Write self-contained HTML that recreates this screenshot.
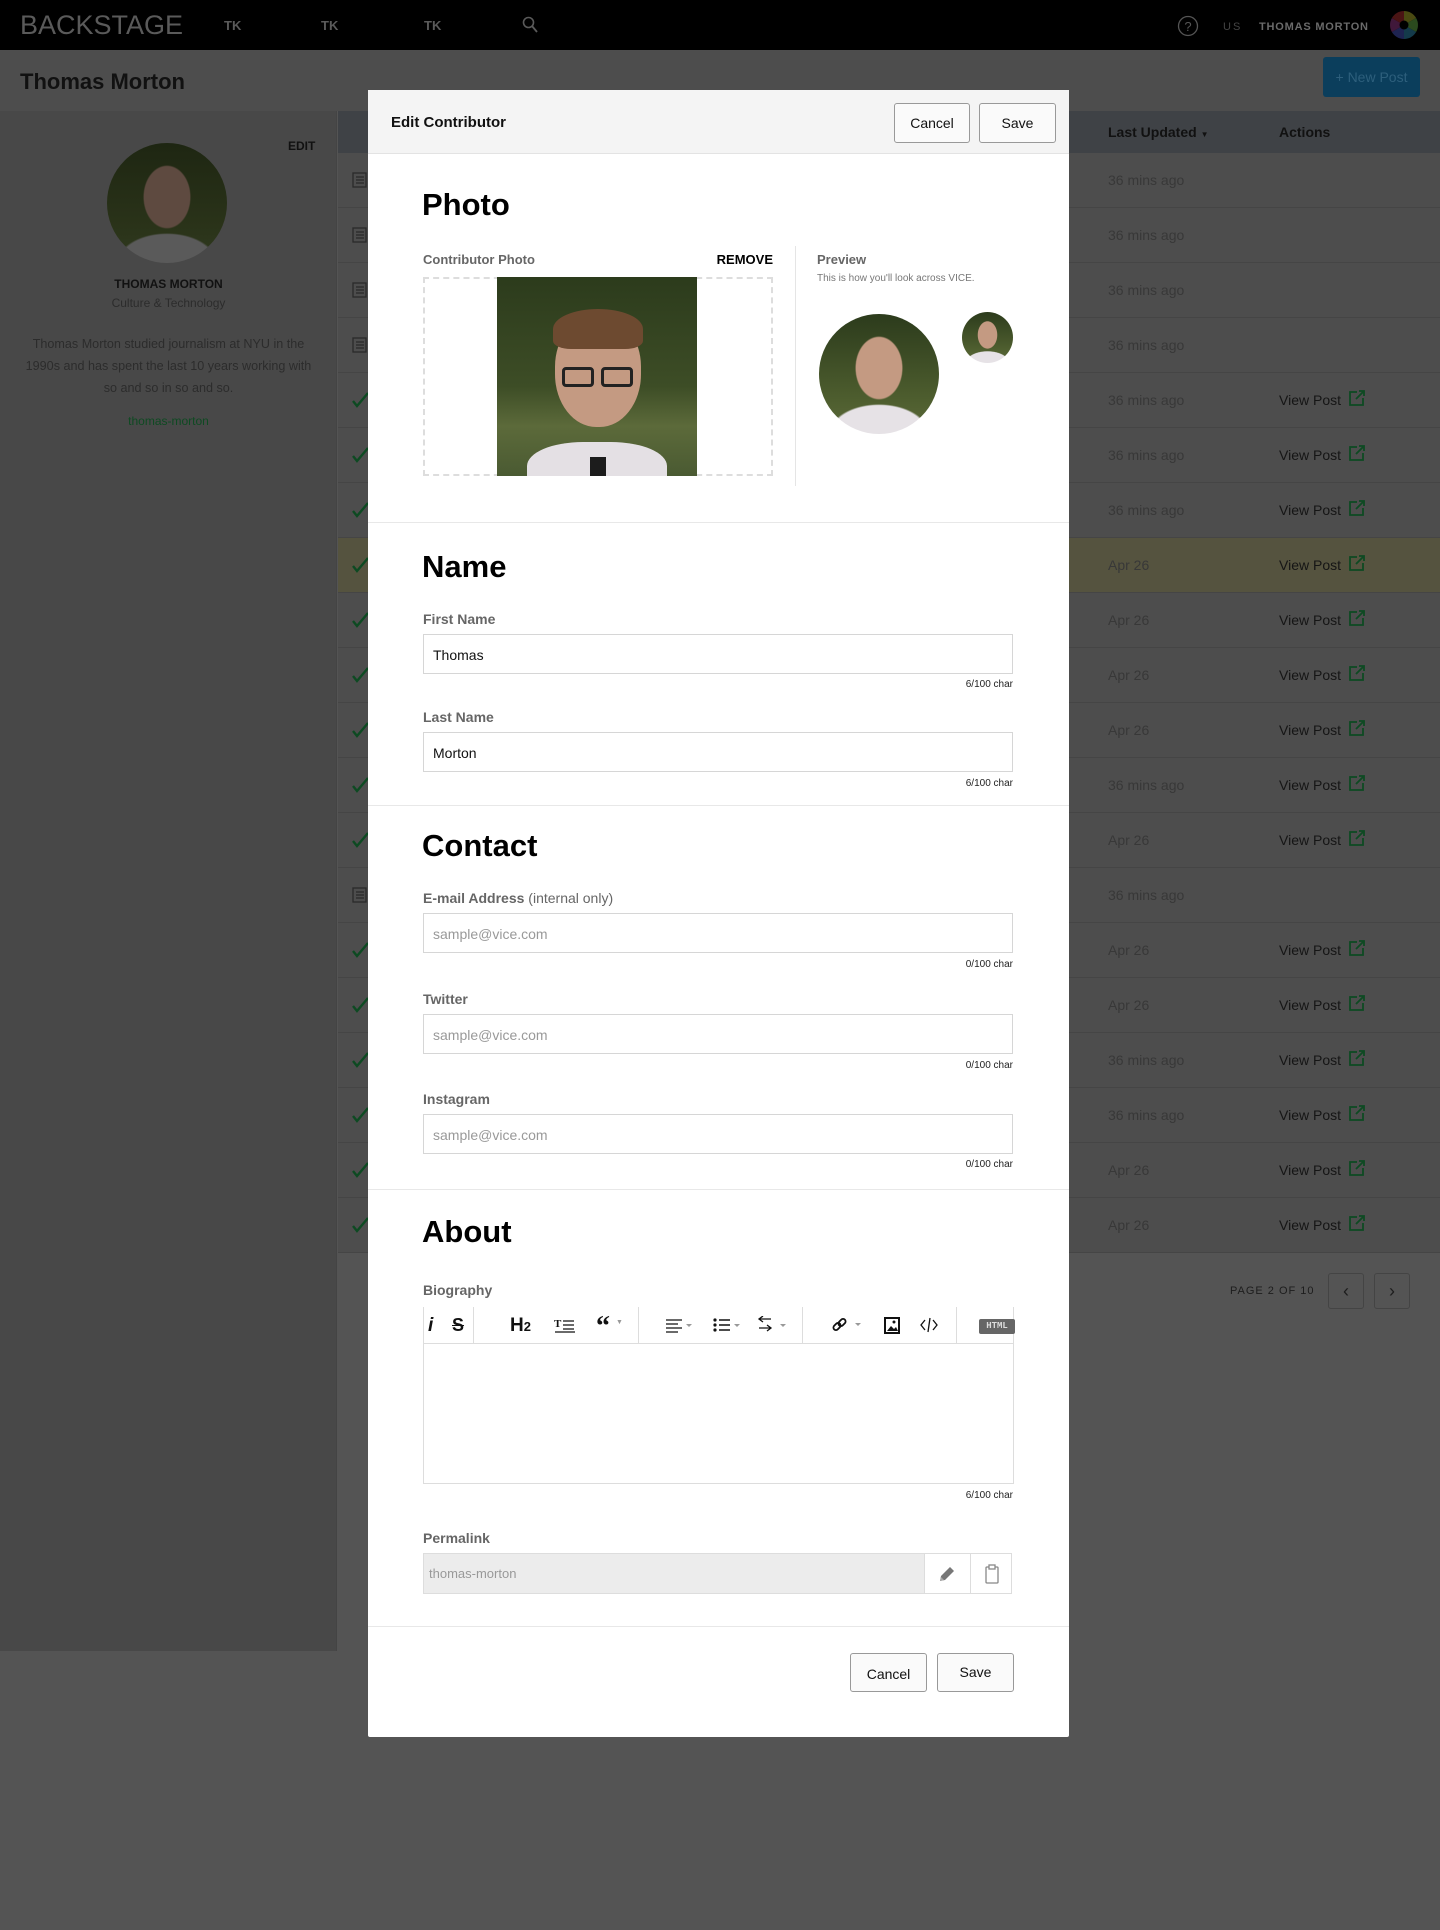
<!DOCTYPE html>
<html><head><meta charset="utf-8"><style>
*{box-sizing:border-box;margin:0;padding:0}
body{width:1440px;height:1930px;background:#545454;font-family:"Liberation Sans",sans-serif;position:relative;overflow:hidden}
.abs{position:absolute}
.nav{left:0;top:0;width:1440px;height:50px;background:#000}
.titlebar{left:0;top:50px;width:1440px;height:61px;background:#4d4d4d}
.sidebar{left:0;top:111px;width:337px;height:1540px;background:#484848;border-right:1px solid #444}
.thead{left:338px;top:111px;width:1102px;height:42px;background:#3f4246}
.row{left:338px;width:1102px;height:55px;background:#4d4d4d;border-bottom:1px solid #454545}
.row.hl{background:#55533f}
.date{left:770px;top:19px;font-size:14px;color:#383838}
.vp{left:941px;top:19px;font-size:14px;color:#151515}
.ext{left:1010px;top:16px}
.ico{left:14px;top:19px}
.modal{left:368px;top:90px;width:701px;height:1647px;background:#fff;border-radius:2px}
.mh{left:0;top:0;width:701px;height:64px;background:#f4f4f4;border-bottom:1px solid #e3e3e3}
.btn{border:1px solid #999;border-radius:3px;background:#fafafa;font-size:14px;color:#111;text-align:center}
h2.s{position:absolute;left:54px;font-size:31px;font-weight:bold;color:#000}
.lbl{position:absolute;left:55px;font-size:14px;font-weight:bold;color:#666}
.inp{position:absolute;left:55px;width:590px;height:40px;border:1px solid #d6d6d6;font-size:14px;padding:12px 9px;color:#111}
.ph{color:#999}
.cnt{position:absolute;right:56px;font-size:10px;color:#222}
.div{position:absolute;left:0;width:701px;height:1px;background:#e8e8e8}
</style></head><body>
<div class="abs nav">
<div class="abs" style="left:20px;top:10px;font-size:27px;color:#5a5a5a">BACKSTAGE</div>
<div class="abs" style="left:224px;top:18px;font-size:13px;font-weight:bold;color:#5a5a5a">TK</div>
<div class="abs" style="left:321px;top:18px;font-size:13px;font-weight:bold;color:#5a5a5a">TK</div>
<div class="abs" style="left:424px;top:18px;font-size:13px;font-weight:bold;color:#5a5a5a">TK</div>
<svg class="abs" style="left:522px;top:16px" width="16" height="18"><circle cx="6.5" cy="6.5" r="5" fill="none" stroke="#5a5a5a" stroke-width="1.6"/><line x1="10" y1="10" x2="15" y2="16" stroke="#5a5a5a" stroke-width="1.8"/></svg>
<svg class="abs" style="left:1177px;top:15px" width="22" height="22"><circle cx="11" cy="11" r="9.5" fill="none" stroke="#555" stroke-width="1.3"/><text x="11" y="16" font-size="13" text-anchor="middle" fill="#555" font-family="Liberation Sans">?</text></svg>
<div class="abs" style="left:1223px;top:21px;font-size:11px;color:#444;letter-spacing:2px">US</div>
<div class="abs" style="left:1259px;top:21px;font-size:11px;font-weight:bold;color:#6a6a6a;letter-spacing:0.8px">THOMAS MORTON</div>
<svg class="abs" style="left:1389px;top:10px" width="30" height="30" viewBox="-15 -15 30 30">
<path d="M0 0L0-14A14 14 0 0 1 12.1-7Z" fill="#4a4a12"/><path d="M0 0L12.1-7A14 14 0 0 1 12.1 7Z" fill="#2b4a1e"/><path d="M0 0L12.1 7A14 14 0 0 1 0 14Z" fill="#143a4a"/><path d="M0 0L0 14A14 14 0 0 1-12.1 7Z" fill="#1e2350"/><path d="M0 0L-12.1 7A14 14 0 0 1-12.1-7Z" fill="#40183a"/><path d="M0 0L-12.1-7A14 14 0 0 1 0-14Z" fill="#4a1414"/><circle r="4.5" fill="#000"/></svg>
</div>
<div class="abs titlebar">
<div class="abs" style="left:20px;top:19px;font-size:22px;font-weight:bold;color:#111">Thomas Morton</div>
<div class="abs" style="left:1323px;top:7px;width:97px;height:40px;background:#0b3e5c;border-radius:3px;color:#2d5f7c;font-size:14px;text-align:center;line-height:40px">+ New Post</div>
</div>
<div class="abs sidebar">
<div class="abs" style="left:288px;top:28px;font-size:12px;font-weight:bold;color:#111">EDIT</div>
<div class="abs" style="left:107px;top:32px;width:120px;height:120px;border-radius:50%;background:radial-gradient(ellipse 24px 32px at 50% 45%,#5e4a40 95%,transparent 100%),radial-gradient(ellipse 50px 30px at 50% 100%,#5a5a5a 95%,transparent 100%),linear-gradient(#1e2612,#2a3319 70%,#303a20)"></div>
<div class="abs" style="left:0;top:166px;width:337px;text-align:center;font-size:12px;font-weight:bold;color:#111">THOMAS MORTON</div>
<div class="abs" style="left:0;top:185px;width:337px;text-align:center;font-size:12px;color:#2c2c2c">Culture &amp; Technology</div>
<div class="abs" style="left:24px;top:222px;width:289px;text-align:center;font-size:12.6px;line-height:22px;color:#2c2c2c">Thomas Morton studied journalism at NYU in the 1990s and has spent the last 10 years working with so and so in so and so.</div>
<div class="abs" style="left:0;top:303px;width:337px;text-align:center;font-size:12px;color:#0e4a22">thomas-morton</div>
</div>
<div class="abs thead">
<div class="abs" style="left:770px;top:13px;font-size:14px;font-weight:bold;color:#111">Last Updated <span style="font-size:8px">▼</span></div>
<div class="abs" style="left:941px;top:13px;font-size:14px;font-weight:bold;color:#111">Actions</div>
</div>
<div id="rows"></div>
<div class="abs" style="left:1230px;top:1285px;font-size:11px;color:#1d1d1d;letter-spacing:1px">PAGE 2 OF 10</div>
<div class="abs" style="left:1328px;top:1273px;width:36px;height:36px;border:1px solid #444;border-radius:3px;color:#1d1d1d;text-align:center;line-height:34px;font-size:18px">‹</div>
<div class="abs" style="left:1374px;top:1273px;width:36px;height:36px;border:1px solid #444;border-radius:3px;color:#1d1d1d;text-align:center;line-height:34px;font-size:18px">›</div>

<div class="abs modal">
<div class="abs mh">
<div class="abs" style="left:23px;top:24px;font-size:15px;font-weight:bold;color:#111">Edit Contributor</div>
<div class="abs btn" style="left:526px;top:13px;width:76px;height:40px;line-height:38px">Cancel</div>
<div class="abs btn" style="left:611px;top:13px;width:77px;height:40px;line-height:38px">Save</div>
</div>
<h2 class="s" style="top:97px">Photo</h2>
<div class="lbl" style="top:162px;font-size:13px">Contributor Photo</div>
<div class="abs" style="right:296px;top:162px;font-size:13px;font-weight:bold;color:#000">REMOVE</div>
<div class="abs" style="left:55px;top:187px;width:350px;height:199px;border:2px dashed #ddd"></div>
<div class="abs" style="left:129px;top:187px;width:200px;height:199px;overflow:hidden;background:linear-gradient(#2c3b1c,#3d4d26 55%,#5c6a3a 75%,#4a5a32)">
<div class="abs" style="left:58px;top:40px;width:86px;height:110px;border-radius:45% 45% 48% 48%;background:#c49a82"></div>
<div class="abs" style="left:56px;top:32px;width:90px;height:40px;border-radius:50% 50% 20% 20%;background:#6d4a30"></div>
<div class="abs" style="left:65px;top:90px;width:32px;height:20px;border:3px solid #222;border-radius:4px"></div>
<div class="abs" style="left:104px;top:90px;width:32px;height:20px;border:3px solid #222;border-radius:4px"></div>
<div class="abs" style="left:30px;top:165px;width:140px;height:60px;border-radius:40% 40% 0 0;background:#e4e0e4"></div>
<div class="abs" style="left:93px;top:180px;width:16px;height:20px;background:#1c1c1c"></div>
</div>
<div class="abs" style="left:427px;top:156px;width:1px;height:240px;background:#e5e5e5"></div>
<div class="abs" style="left:449px;top:162px;font-size:13px;font-weight:bold;color:#666">Preview</div>
<div class="abs" style="left:449px;top:183px;font-size:10px;color:#777">This is how you'll look across VICE.</div>
<div class="abs" style="left:451px;top:224px;width:120px;height:120px;border-radius:50%;background:radial-gradient(ellipse 24px 32px at 50% 45%,#c49a82 95%,transparent 100%),radial-gradient(ellipse 50px 30px at 50% 100%,#e6e2e6 95%,transparent 100%),linear-gradient(#2c3b1c,#4d5d2e 70%,#5c6a3a)"></div>
<div class="abs" style="left:594px;top:222px;width:51px;height:51px;border-radius:50%;background:radial-gradient(ellipse 10px 14px at 50% 45%,#c49a82 95%,transparent 100%),radial-gradient(ellipse 22px 12px at 50% 100%,#e6e2e6 95%,transparent 100%),linear-gradient(#2c3b1c,#4d5d2e 70%,#5c6a3a)"></div>
<div class="div" style="top:432px"></div>
<h2 class="s" style="top:459px">Name</h2>
<div class="lbl" style="top:521px">First Name</div>
<div class="inp" style="top:544px">Thomas</div>
<div class="cnt" style="top:589px">6/100 char</div>
<div class="lbl" style="top:619px">Last Name</div>
<div class="inp" style="top:642px">Morton</div>
<div class="cnt" style="top:688px">6/100 char</div>
<div class="div" style="top:715px"></div>
<h2 class="s" style="top:738px">Contact</h2>
<div class="lbl" style="top:800px">E-mail Address <span style="font-weight:normal">(internal only)</span></div>
<div class="inp ph" style="top:823px">sample@vice.com</div>
<div class="cnt" style="top:869px">0/100 char</div>
<div class="lbl" style="top:901px">Twitter</div>
<div class="inp ph" style="top:924px">sample@vice.com</div>
<div class="cnt" style="top:970px">0/100 char</div>
<div class="lbl" style="top:1001px">Instagram</div>
<div class="inp ph" style="top:1024px">sample@vice.com</div>
<div class="cnt" style="top:1069px">0/100 char</div>
<div class="div" style="top:1099px"></div>
<h2 class="s" style="top:1124px">About</h2>
<div class="lbl" style="top:1192px">Biography</div>
<div class="abs" style="left:55px;top:1217px;width:591px;height:177px;border:1px solid #ddd;border-top:none"></div>
<div class="abs" style="left:55px;top:1217px;width:591px;height:37px;border-bottom:1px solid #ddd;font-weight:bold;color:#111">
<span class="abs" style="left:5px;top:8px;font-size:19px;font-style:italic">i</span>
<span class="abs" style="left:29px;top:8px;font-size:18px;text-decoration:line-through">S</span>
<span class="abs" style="left:50px;top:0;width:1px;height:37px;background:#ddd"></span>
<span class="abs" style="left:87px;top:8px;font-size:19px">H<small style="font-size:13px">2</small></span>
<svg class="abs" style="left:131px;top:11px" width="22" height="15"><text x="0" y="9" font-size="11" font-family="Liberation Serif" fill="#111">T</text><path d="M9 3h11M9 7h11M9 11h11M1 14h20" stroke="#111" stroke-width="1.2"/></svg>
<span class="abs" style="left:173px;top:4px;font-size:28px;font-family:'Liberation Serif'">“</span><span class="abs" style="left:193px;top:12px;font-size:7px;color:#999">▼</span>
<span class="abs" style="left:215px;top:0;width:1px;height:37px;background:#ddd"></span>
<svg class="abs" style="left:243px;top:11px" width="30" height="15"><path d="M0 2h16M0 6h12M0 10h16M0 14h12" stroke="#111" stroke-width="1.2"/><path d="M20 6l3 3 3-3z" fill="#999"/></svg>
<svg class="abs" style="left:290px;top:11px" width="30" height="15"><circle cx="2" cy="2" r="1.6" fill="#111"/><circle cx="2" cy="7" r="1.6" fill="#111"/><circle cx="2" cy="12" r="1.6" fill="#111"/><path d="M6 2h11M6 7h11M6 12h11" stroke="#111" stroke-width="1.4"/><path d="M21 6l3 3 3-3z" fill="#999"/></svg>
<svg class="abs" style="left:334px;top:9px" width="32" height="18"><path d="M14 3H2m4-3L2 3l4 3M2 12h12m-4-3l4 3-4 3" stroke="#111" stroke-width="1.3" fill="none"/><path d="M23 8l3 3 3-3z" fill="#999"/></svg>
<span class="abs" style="left:379px;top:0;width:1px;height:37px;background:#ddd"></span>
<svg class="abs" style="left:409px;top:10px" width="34" height="18"><g fill="none" stroke="#111" stroke-width="1.8"><rect x="1" y="7" width="8" height="5" rx="2.5" transform="rotate(-45 5 9.5)"/><rect x="6" y="3" width="8" height="5" rx="2.5" transform="rotate(-45 10 5.5)"/></g><path d="M23 6l3 3 3-3z" fill="#999"/></svg>
<svg class="abs" style="left:461px;top:10px" width="16" height="17"><rect x="1" y="1" width="14" height="15" fill="none" stroke="#111" stroke-width="2"/><path d="M3 14l4-5 3 3 2-2 2 4z" fill="#111"/><circle cx="10" cy="5" r="1.5" fill="#111"/></svg>
<svg class="abs" style="left:497px;top:10px" width="18" height="16"><path d="M5 3L1 8l4 5M13 3l4 5-4 5M10 1L8 15" stroke="#111" stroke-width="1.3" fill="none"/></svg>
<span class="abs" style="left:533px;top:0;width:1px;height:37px;background:#ddd"></span>
<span class="abs" style="left:556px;top:12px;width:36px;height:15px;background:#666;color:#ddd;font-size:9px;line-height:15px;text-align:center;border-radius:2px;font-family:'Liberation Mono'">HTML</span>
</div>
<div class="cnt" style="top:1400px">6/100 char</div>
<div class="lbl" style="top:1440px">Permalink</div>
<div class="abs" style="left:55px;top:1463px;width:589px;height:41px;border:1px solid #ddd;background:#ececec;font-size:13px;color:#999;padding:12px 5px">thomas-morton</div>
<div class="abs" style="left:556px;top:1464px;width:87px;height:39px;background:#fff;border-left:1px solid #ddd">
<svg class="abs" style="left:12px;top:10px" width="20" height="20"><path d="M3 17l1-5L13 3l4 4-9 9z" fill="#777"/><path d="M3 17l1-4 3 3z" fill="#aaa"/></svg>
<span class="abs" style="left:45px;top:0;width:1px;height:39px;background:#ddd"></span>
<svg class="abs" style="left:59px;top:9px" width="16" height="22"><rect x="2" y="4" width="12" height="16" rx="1" fill="none" stroke="#888" stroke-width="1.3"/><rect x="5" y="2" width="6" height="4" fill="#fff" stroke="#888" stroke-width="1.3"/></svg>
</div>
<div class="div" style="top:1536px"></div>
<div class="abs btn" style="left:482px;top:1563px;width:77px;height:39px;line-height:40px">Cancel</div>
<div class="abs btn" style="left:569px;top:1563px;width:77px;height:39px;line-height:37px">Save</div>
</div>

<script>
var d=[["d","36 mins ago",0],["d","36 mins ago",0],["d","36 mins ago",0],["d","36 mins ago",0],["c","36 mins ago",1],["c","36 mins ago",1],["c","36 mins ago",1],["c","Apr 26",1,1],["c","Apr 26",1],["c","Apr 26",1],["c","Apr 26",1],["c","36 mins ago",1],["c","Apr 26",1],["d","36 mins ago",0],["c","Apr 26",1],["c","Apr 26",1],["c","36 mins ago",1],["c","36 mins ago",1],["c","Apr 26",1],["c","Apr 26",1]];
var h="";
d.forEach(function(r,i){
var top=153+i*55;
var ic=r[0]=="d"?'<svg class="abs ico" width="16" height="16"><rect x="1" y="1" width="13" height="14" fill="none" stroke="#2a2a2a" stroke-width="1.3"/><path d="M4 5h8M4 8h8M4 11h8" stroke="#2a2a2a" stroke-width="1.2"/></svg>':'<svg class="abs ico" width="18" height="16"><path d="M1 9l4 5L16 1" stroke="#0d4a22" stroke-width="2.4" fill="none"/></svg>';
var vp=r[2]?'<div class="abs vp">View Post</div><svg class="abs ext" width="18" height="18"><path d="M9 3H2v13h13V9" stroke="#0d4a22" stroke-width="1.8" fill="none"/><path d="M8 10L16 2M11 2h5v5" stroke="#0d4a22" stroke-width="1.8" fill="none"/></svg>':'';
h+='<div class="abs row'+(r[3]?' hl':'')+'" style="top:'+top+'px">'+ic+'<div class="abs date">'+r[1]+'</div>'+vp+'</div>';
});
document.getElementById("rows").innerHTML=h;
</script>
</body></html>
